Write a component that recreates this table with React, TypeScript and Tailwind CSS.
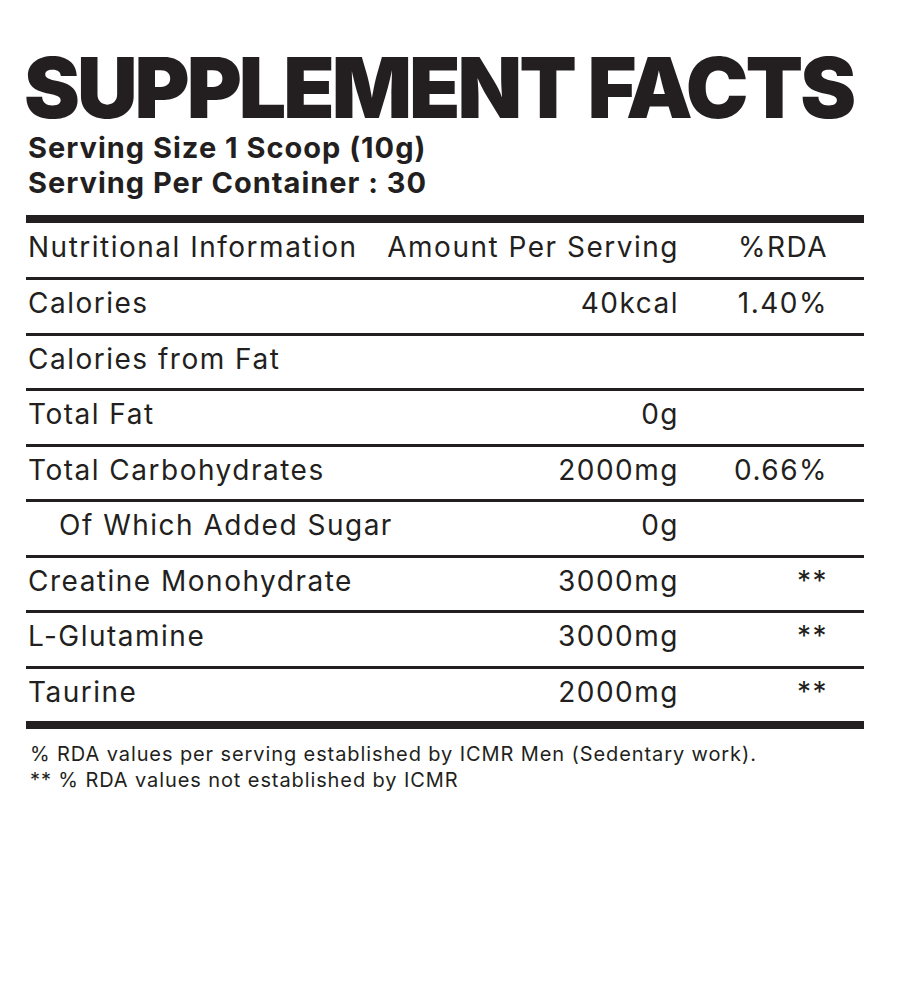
import React from "react";

type Row = { name: string; amount?: string; rda?: string; indent?: boolean };

const rows: Row[] = [
  { name: "Calories", amount: "40kcal", rda: "1.40%" },
  { name: "Calories from Fat" },
  { name: "Total Fat", amount: "0g" },
  { name: "Total Carbohydrates", amount: "2000mg", rda: "0.66%" },
  { name: "Of Which Added Sugar", amount: "0g", indent: true },
  { name: "Creatine Monohydrate", amount: "3000mg", rda: "**" },
  { name: "L-Glutamine", amount: "3000mg", rda: "**" },
  { name: "Taurine", amount: "2000mg", rda: "**" },
];

const App: React.FC = () => {
  return (
    <div
      className="w-[902px] h-[1000px] bg-white text-[#231f20]"
      style={{ fontFamily: "Inter, 'Noto Sans', sans-serif" }}
    >
      <div className="pl-[26px] pr-[38px] pt-[46px]">
        {/* Title */}
        <h1 className="text-[84px] font-black leading-[84px] tracking-[-3px] whitespace-nowrap -ml-[2px]">
          SUPPLEMENT FACTS
        </h1>
        <div className="pl-[2px] text-[29px] font-bold leading-[35px] tracking-[1px] whitespace-nowrap">
          <p>Serving Size 1 Scoop (10g)</p>
          <p>Serving Per Container : 30</p>
        </div>

        {/* Table */}
        <div className="mt-[15px] border-t-[8px] border-b-[8px] border-[#231f20]">
          <div className="flex items-center h-[54px] pb-[6px] pl-[2px] text-[28px] leading-none tracking-[1.5px] whitespace-nowrap">
            <span className="flex-1 min-w-0">Nutritional Information</span>
            <span className="shrink-0 text-right">Amount Per Serving</span>
            <span className="w-[185px] shrink-0 pr-[36px] text-right">%RDA</span>
          </div>
          {rows.map((r) => (
            <div
              key={r.name}
              className="flex items-center h-[55.5px] pb-[6px] border-t-[3px] border-[#231f20] pl-[2px] text-[28px] leading-none tracking-[1.5px] whitespace-nowrap"
            >
              <span className={r.indent ? "flex-1 min-w-0 pl-[31px]" : "flex-1 min-w-0"}>{r.name}</span>
              <span className="w-[200px] shrink-0 text-right">{r.amount}</span>
              <span className="w-[185px] shrink-0 pr-[36px] text-right">{r.rda}</span>
            </div>
          ))}
        </div>

        {/* Footnotes */}
        <div className="mt-[12px] pl-[4px] text-[20px] leading-[26px] tracking-[0.9px] whitespace-nowrap">
          <p>% RDA values per serving established by ICMR Men (Sedentary work).</p>
          <p>** % RDA values not established by ICMR</p>
        </div>
      </div>
    </div>
  );
};

export default App;
